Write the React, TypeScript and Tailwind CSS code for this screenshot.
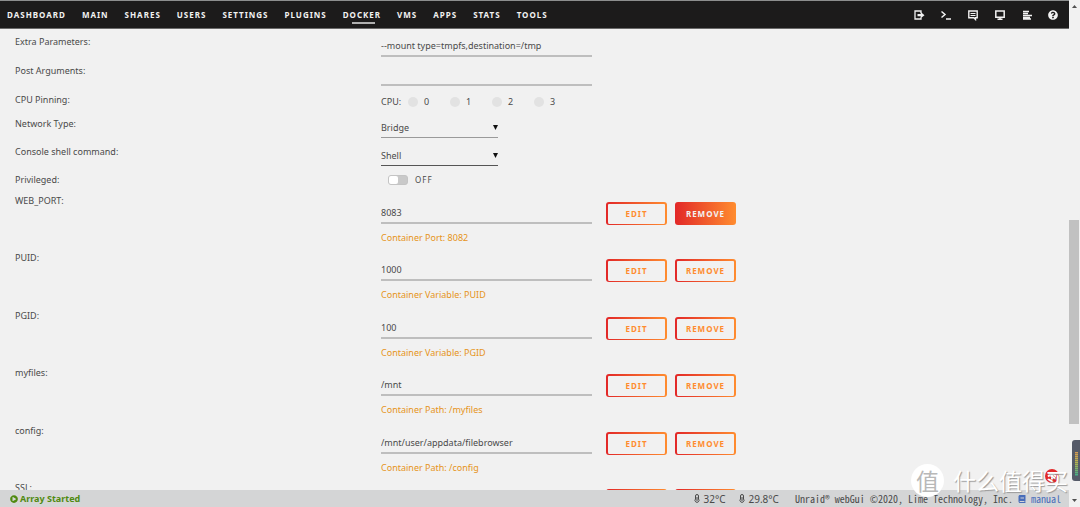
import React from "react";
import { FaBook, FaPlayCircle, FaQuestionCircle } from "react-icons/fa";

const NAV = ["Dashboard", "Main", "Shares", "Users", "Settings", "Plugins", "Docker", "VMs", "Apps", "Stats", "Tools"];

const VARIABLES = [
  { name: "WEB_PORT", value: "8083", hint: "Container Port: 8082", filled: true },
  { name: "PUID", value: "1000", hint: "Container Variable: PUID" },
  { name: "PGID", value: "100", hint: "Container Variable: PGID" },
  { name: "myfiles", value: "/mnt", hint: "Container Path: /myfiles" },
  { name: "config", value: "/mnt/user/appdata/filebrowser", hint: "Container Path: /config" },
  { name: "SSL", value: "", hint: "" },
];

const TOOLS = [
  {
    label: "Logout",
    icon: (
      <>
        <path d="M8 4V2H2v8h6V8.500" fill="none" stroke="currentColor" strokeWidth="1.300" />
        <path d="M4.500 5h3.200V3L11.500 6.200 7.700 9.200V7.300H4.500z" fill="currentColor" />
      </>
    ),
  },
  { label: "Terminal", icon: <path d="M1.500 2.500 5 5.500 1.500 8.500M6 10h5" fill="none" stroke="currentColor" strokeWidth="1.500" /> },
  {
    label: "Feedback",
    icon: (
      <>
        <path d="M1.800 2h8.400v6.800H8.500V10.500L6.800 8.800h-5z" fill="none" stroke="currentColor" strokeWidth="1.400" />
        <path d="M3.500 4.500h5M3.500 6.500h5" stroke="currentColor" strokeWidth="1" />
      </>
    ),
  },
  {
    label: "Info",
    icon: (
      <>
        <path d="M1.800 2h8.400v6.200H1.800z" fill="none" stroke="currentColor" strokeWidth="1.500" />
        <path d="M3.500 10.300h5M6 8v2" stroke="currentColor" strokeWidth="1.500" />
      </>
    ),
  },
  { label: "Log", icon: <path d="M2 2.500h6M2 4.500h5M2 6.500h9M2 8.500h7M2 10h8" stroke="currentColor" strokeWidth="1.400" /> },
];

function Field({ id, label, className, children }: { id: string; label: string; className: string; children: React.ReactNode }) {
  return (
    <div className={`grid shrink-0 grid-cols-[366px_1fr] items-start ${className}`}>
      <label htmlFor={id} className="leading-3">{label}:</label>
      {children}
    </div>
  );
}

function TextBox({ id, value }: { id: string; value: string }) {
  return (
    <input
      id={id}
      defaultValue={value}
      className="block h-[21px] w-[211px] border-b-2 border-[#bebebe] bg-transparent outline-none"
    />
  );
}

function Choice({ id, value, options, border }: { id: string; value: string; options: string[]; border: string }) {
  return (
    <div className={`relative w-[117px] border-b ${border}`}>
      <select id={id} defaultValue={value} className="h-[19px] w-full appearance-none bg-transparent outline-none">
        {options.map((o) => (
          <option key={o}>{o}</option>
        ))}
      </select>
      <svg viewBox="0 0 6 6" className="pointer-events-none absolute right-0 top-[7px] size-[5px]" aria-hidden="true">
        <path d="M0 0h6L3 6z" fill="#111" />
      </svg>
    </div>
  );
}

function ActionButton({ label, filled, width }: { label: string; filled?: boolean; width: string }) {
  const look = filled
    ? "text-[#f2f2f2] [background:linear-gradient(90deg,#e22828,#ff8c2f)_border-box]"
    : "text-[#ff8c2f] [background:linear-gradient(#f1f1f1,#f1f1f1)_padding-box,linear-gradient(90deg,#e22828,#ff8c2f)_border-box]";
  return (
    <button
      type="button"
      className={`h-[23px] rounded-[3px] border-2 border-b border-transparent text-[8px] font-bold uppercase leading-none tracking-[1px] ${width} ${look}`}
    >
      {label}
    </button>
  );
}

function Thermometer() {
  return (
    <svg viewBox="0 0 6 9" className="h-[9px] w-[6px]" aria-hidden="true">
      <path d="M1.500 5V2a1.500 1.500 0 0 1 3 0v3a2 2 0 1 1-3 0z" fill="none" stroke="currentColor" />
      <path d="M3 3v4" stroke="currentColor" />
    </svg>
  );
}

export default function App() {
  return (
    <div className="relative flex h-screen bg-[#f1f1f1] font-['Noto_Sans',sans-serif] text-[9px] text-[#4a4a4a]">
      <div className="flex min-w-0 flex-1 flex-col">
        <header className="flex h-[29px] shrink-0 items-center justify-between border-y border-t-[#8c8e8e] border-b-[#6a6a6a] bg-[#1c1b1b] pl-[7px] pr-[11px] text-[#f2f2f2]">
          <nav className="flex gap-4 text-[8px] font-bold uppercase leading-3 tracking-[1px]">
            {NAV.map((n) => (
              <a key={n} href={`#${n}`} className="relative">
                {n}
                {n === "Docker" && <span className="absolute -bottom-[3px] left-1/4 h-[2px] w-[23px] bg-[#b0b0b0]" />}
              </a>
            ))}
          </nav>
          <div className="flex gap-[15px]">
            {TOOLS.map((t) => (
              <button key={t.label} type="button" aria-label={t.label}>
                <svg viewBox="0 0 12 12" className="size-3">{t.icon}</svg>
              </button>
            ))}
            <button type="button" aria-label="Help">
              <FaQuestionCircle className="size-[10px]" />
            </button>
          </div>
        </header>

        <main className="flex min-h-0 flex-1 flex-col overflow-hidden pl-[15px] pt-[7px]">
          <Field id="extra" label="Extra Parameters" className="h-[29px]">
            <TextBox id="extra" value="--mount type=tmpfs,destination=/tmp" />
          </Field>
          <Field id="post" label="Post Arguments" className="h-[29px]">
            <TextBox id="post" value="" />
          </Field>
          <Field id="cpu0" label="CPU Pinning" className="h-[24px]">
            <div className="flex items-center pt-[2px] leading-3">
              <span className="w-[27px]">CPU:</span>
              {[0, 1, 2, 3].map((n) => (
                <label key={n} className="flex w-[42px] items-center gap-[6px]">
                  <input id={`cpu${n}`} type="checkbox" className="size-[10px] appearance-none rounded-full bg-[#e2e2e2]" />
                  {n}
                </label>
              ))}
            </div>
          </Field>
          <Field id="network" label="Network Type" className="h-[28px]">
            <Choice id="network" value="Bridge" options={["Bridge", "Host", "None"]} border="border-[#9a9a9a]" />
          </Field>
          <Field id="shell" label="Console shell command" className="h-[28px]">
            <Choice id="shell" value="Shell" options={["Shell", "Bash"]} border="border-[#555]" />
          </Field>
          <Field id="privileged" label="Privileged" className="h-[21px]">
            <div className="flex items-center gap-[7px] pl-[7px]">
              <input
                id="privileged"
                type="checkbox"
                role="switch"
                className="h-[10px] w-[20px] appearance-none rounded-[3px] border border-[#c4c4c4] bg-[#c9c9c9] before:block before:h-[8px] before:w-[9px] before:rounded-[2px] before:bg-white"
              />
              <span className="text-[8px] leading-3 tracking-[1px]">OFF</span>
            </div>
          </Field>

          {VARIABLES.map((v) => (
            <Field key={v.name} id={v.name} label={v.name} className="odd:h-[57px] even:h-[58px]">
              <div className="flex gap-[14px] pt-[7px]">
                <div className="pt-px">
                  <TextBox id={v.name} value={v.value} />
                  <p className="mt-2 leading-3 text-[#e6941a]">{v.hint}</p>
                </div>
                <div className="flex items-start gap-2">
                  <ActionButton label="Edit" width="w-[61px]" />
                  <ActionButton label="Remove" width="w-[61px]" filled={v.filled} />
                </div>
              </div>
            </Field>
          ))}
        </main>

        <footer className="flex h-[17px] shrink-0 items-center justify-between bg-[#d4d5d6] pl-[10px] pr-[8px]">
          <span className="flex items-center gap-[2px] font-bold text-[#4f8a10]">
            <FaPlayCircle className="size-2" />
            Array Started
          </span>
          <div className="flex items-center text-[10px] leading-3">
            <span className="flex items-center gap-[3px]">
              <Thermometer />
              32°C
            </span>
            <span className="ml-[14px] flex items-center gap-[3px]">
              <Thermometer />
              29.8°C
            </span>
            <span className="ml-4 flex items-center gap-[5px] font-['Noto_Sans_Mono_CJK_SC','DejaVu_Sans_Mono',monospace]">
              Unraid® webGui ©2020, Lime Technology, Inc.
              <a href="#manual" className="flex items-center gap-[5px] text-[#486dba]">
                <FaBook className="size-2" />
                manual
              </a>
            </span>
          </div>
        </footer>
      </div>

      <div className="flex w-[11px] shrink-0 flex-col items-center bg-[#f1f1f1] py-[5px]" aria-hidden="true">
        <svg viewBox="0 0 5 3" className="h-[3px] w-[5px]"><path d="M0 3h5L2.500 0z" fill="#505050" /></svg>
        <div className="flex w-full flex-1 flex-col">
          <div className="flex-[212]" />
          <div className="mr-px flex-[204] bg-[#c1c1c1]" />
          <div className="flex-[75]" />
        </div>
        <svg viewBox="0 0 5 3" className="h-[3px] w-[5px]"><path d="M0 0h5L2.500 3z" fill="#505050" /></svg>
      </div>

      <a href="#top" aria-label="Back to top" className="absolute bottom-6 right-[21px]">
        <svg viewBox="0 0 14 14" className="size-[14px]">
          <circle cx="7" cy="7" r="7" fill="#e22828" />
          <path d="M3 7.500 7 4l4 3.500M7 5v5.500" fill="none" stroke="#fff" strokeWidth="2" />
        </svg>
      </a>

      <div className="absolute bottom-[26px] right-0 flex h-[41px] w-2 justify-center rounded-l-[3px] bg-[#555a68] pb-[5px] pt-3" aria-hidden="true">
        <svg viewBox="0 0 3 24" className="h-6 w-[3px]">
          <defs>
            <linearGradient id="meter" x1="0" y1="0" x2="0" y2="1">
              <stop offset="0" stopColor="#d79a50" />
              <stop offset=".45" stopColor="#b5b450" />
              <stop offset="1" stopColor="#3fb08a" />
            </linearGradient>
          </defs>
          <rect width="3" height="24" fill="url(#meter)" />
          <path d="M1.500 1.500v22.500" stroke="#555a68" strokeWidth="3" strokeDasharray=".5 1.500" />
        </svg>
      </div>

      <div className="pointer-events-none absolute bottom-[10px] right-3 flex items-center gap-[9px] font-['Noto_Sans_CJK_SC',sans-serif]">
        <span className="flex size-[33px] items-center justify-center rounded-full bg-white text-[23px] leading-none text-[#b8b8b8]">值</span>
        <span className="text-[23px] leading-[33px] text-white [text-shadow:1px_1px_1px_#999]">什么值得买</span>
      </div>
    </div>
  );
}
